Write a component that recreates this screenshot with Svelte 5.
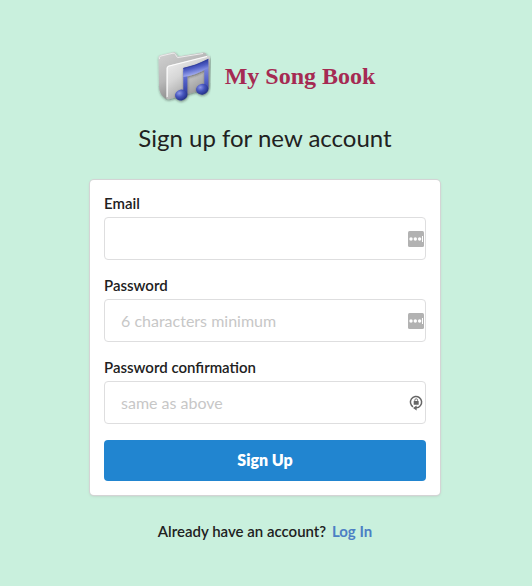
<script>
  let email = $state('');
  let password = $state('');
  let confirmation = $state('');
</script>

{#snippet dots()}
  <svg class="field-icon" viewBox="0 0 16 16" aria-hidden="true">
    <rect width="16" height="16" rx="1.5" fill="#b2b2b2" />
    <circle cx="3" cy="8" r="1.7" fill="#fff" />
    <circle cx="7.3" cy="8" r="1.7" fill="#fff" />
    <circle cx="11.6" cy="8" r="1.7" fill="#fff" />
    <path d="M14.5 5v6" stroke="#fff" stroke-width="1" />
  </svg>
{/snippet}

<main>
  <header class="brand">
    <svg class="logo" viewBox="0 0 56 56" aria-hidden="true">
      <defs>
        <linearGradient id="back" x1="0" y1="0" x2="0.6" y2="1">
          <stop offset="0" stop-color="#d2d2d2" />
          <stop offset="0.5" stop-color="#b8b8b8" />
          <stop offset="1" stop-color="#777" />
        </linearGradient>
        <linearGradient id="front" x1="0" y1="0" x2="0.7" y2="1">
          <stop offset="0" stop-color="#f4f4f4" />
          <stop offset="0.45" stop-color="#d6d6d6" />
          <stop offset="1" stop-color="#8c8c8c" />
        </linearGradient>
        <linearGradient id="beam" gradientUnits="userSpaceOnUse" x1="39" y1="15" x2="42" y2="26">
          <stop offset="0" stop-color="#2c3a9c" />
          <stop offset="0.4" stop-color="#4d5cc4" />
          <stop offset="1" stop-color="#a3adf0" />
        </linearGradient>
        <linearGradient id="stem" x1="0" y1="0" x2="0" y2="1">
          <stop offset="0" stop-color="#8590e2" />
          <stop offset="0.5" stop-color="#5563cb" />
          <stop offset="1" stop-color="#2c3a9c" />
        </linearGradient>
        <radialGradient id="head" cx="0.38" cy="0.3" r="0.75">
          <stop offset="0" stop-color="#8d98e8" />
          <stop offset="0.45" stop-color="#4655bd" />
          <stop offset="1" stop-color="#202c80" />
        </radialGradient>
        <filter id="soft" x="-20%" y="-20%" width="140%" height="150%">
          <feDropShadow dx="0.5" dy="1.2" stdDeviation="1" flood-color="#222" flood-opacity="0.5" />
        </filter>
      </defs>
      <g filter="url(#soft)">
        <path d="M3.5 9Q3.5 7.6 5 7.2L18 4.2Q20 3.8 21 5.5L23 8.5L48 4.6Q51 4.2 51.4 6.5L51 38L11 51Q4 46 4 39Z" fill="url(#back)" />
        <path d="M4.4 11V9.6Q4.4 8.4 6 8L18 5.2Q19.6 5 20.4 6.5L22.5 9.6L48 5.5" fill="none" stroke="#ececec" stroke-width="1" />
        <path d="M11.5 20Q11.5 18 13.5 17.5L52 7.7Q55 7.2 55 9.6L54 38Q54 40 52 40.8L14 51.2Q11 52 11 49Z" fill="url(#front)" />
        <path d="M12.2 49V20Q12.2 18.6 14 18.1L52 8.5" fill="none" stroke="#fff" stroke-width="1" />
      </g>
      <g filter="url(#soft)">
        <path d="M28.3 23H32.3V47H28.3ZM49.3 17H53.3V41H49.3Z" fill="url(#stem)" />
        <path d="M28.3 20Q41 17.5 53.3 11V19.5Q42 27 28.3 29Z" fill="url(#beam)" />
        <path d="M28.3 20.4Q41 17.9 53.3 11.4" fill="none" stroke="#2c3a9c" stroke-width=".8" />
        <ellipse cx="26.2" cy="47" rx="6.2" ry="5.4" transform="rotate(-12 26.2 47)" fill="url(#head)" />
        <ellipse cx="47.2" cy="41.2" rx="6.2" ry="5.4" transform="rotate(-12 47.2 41.2)" fill="url(#head)" />
      </g>
    </svg>
    <span class="name">My Song Book</span>
  </header>

  <h1>Sign up for new account</h1>

  <form class="card" onsubmit={(event) => event.preventDefault()}>
    <div class="field">
      <label for="email">Email</label>
      <div class="control">
        <input id="email" type="email" bind:value={email} />
        {@render dots()}
      </div>
    </div>
    <div class="field">
      <label for="password">Password</label>
      <div class="control">
        <input id="password" type="password" placeholder="6 characters minimum" bind:value={password} />
        {@render dots()}
      </div>
    </div>
    <div class="field">
      <label for="confirmation">Password confirmation</label>
      <div class="control">
        <input id="confirmation" type="password" placeholder="same as above" bind:value={confirmation} />
        <svg class="field-icon" viewBox="0 0 16 16" aria-hidden="true">
          <path d="M5 11.8A5.6 5.6 0 1 1 12.4 10.6M12.4 10.6Q10.8 12.8 8 12.8" fill="none" stroke="#666" stroke-width="1.5" />
          <path d="M8.6 10.4v5L5 12.9Z" fill="#666" />
          <rect x="5.7" y="6" width="5" height="3.8" rx=".4" fill="#666" />
          <path d="M6.8 6.2V5.2a1.4 1.4 0 0 1 2.8 0v1" fill="none" stroke="#666" stroke-width=".9" />
        </svg>
      </div>
    </div>
    <button type="submit">Sign Up</button>
  </form>

  <p class="login">Already have an account? <a href="#login">Log In</a></p>
</main>

<style>
  :global(body) {
    margin: 0;
    padding-right: 2px;
    background: #c9f0dd;
  }

  main {
    box-sizing: border-box;
    max-width: 382px;
    margin: 0 auto;
    padding: 48px 16px 32px;
    font-family: Lato, sans-serif;
    color: #212121;
  }

  .brand {
    display: flex;
    align-items: center;
    justify-content: center;
    gap: 14px;
  }

  .logo {
    width: 56px;
    height: 56px;
  }

  .name {
    font: bold 24px/32px "Liberation Serif", serif;
    color: #a52a52;
    white-space: nowrap;
  }

  h1 {
    margin: 16px 0 24px;
    font-size: 24px;
    line-height: 36px;
    font-weight: 400;
    text-align: center;
  }

  .card {
    display: flex;
    flex-direction: column;
    gap: 16px;
    padding: 14px;
    background: #fff;
    border-radius: 4px;
    box-shadow: 0 0 0 1px #d4d4d5, 0 1px 3px 0 #b9c6bf;
  }

  .field {
    display: flex;
    flex-direction: column;
    gap: 4px;
  }

  label {
    font-size: 15px;
    line-height: 19px;
    font-weight: 600;
  }

  .control {
    position: relative;
  }

  input {
    display: block;
    box-sizing: border-box;
    width: 100%;
    height: 43px;
    padding: 0 32px 0 16px;
    border: 1px solid #dededf;
    border-radius: 4px;
    background: #fff;
    font: 16px/20px Lato, sans-serif;
    color: inherit;
  }

  input::placeholder {
    color: #c7c7c7;
    opacity: 1;
  }

  .field-icon {
    position: absolute;
    top: 14px;
    right: 2px;
    width: 16px;
    height: 16px;
  }

  button {
    height: 41px;
    padding: 0 16px 2px;
    border: 0;
    border-radius: 4px;
    background: #2185d0;
    color: #fff;
    font: 800 16px/20px Lato, sans-serif;
    cursor: pointer;
  }

  .login {
    margin: 26px 0 0;
    font-size: 15px;
    line-height: 20px;
    font-weight: 600;
    text-align: center;
  }

  a {
    margin-left: 2px;
    color: #4c7fc4;
    font-weight: 700;
    text-decoration: none;
  }
</style>
